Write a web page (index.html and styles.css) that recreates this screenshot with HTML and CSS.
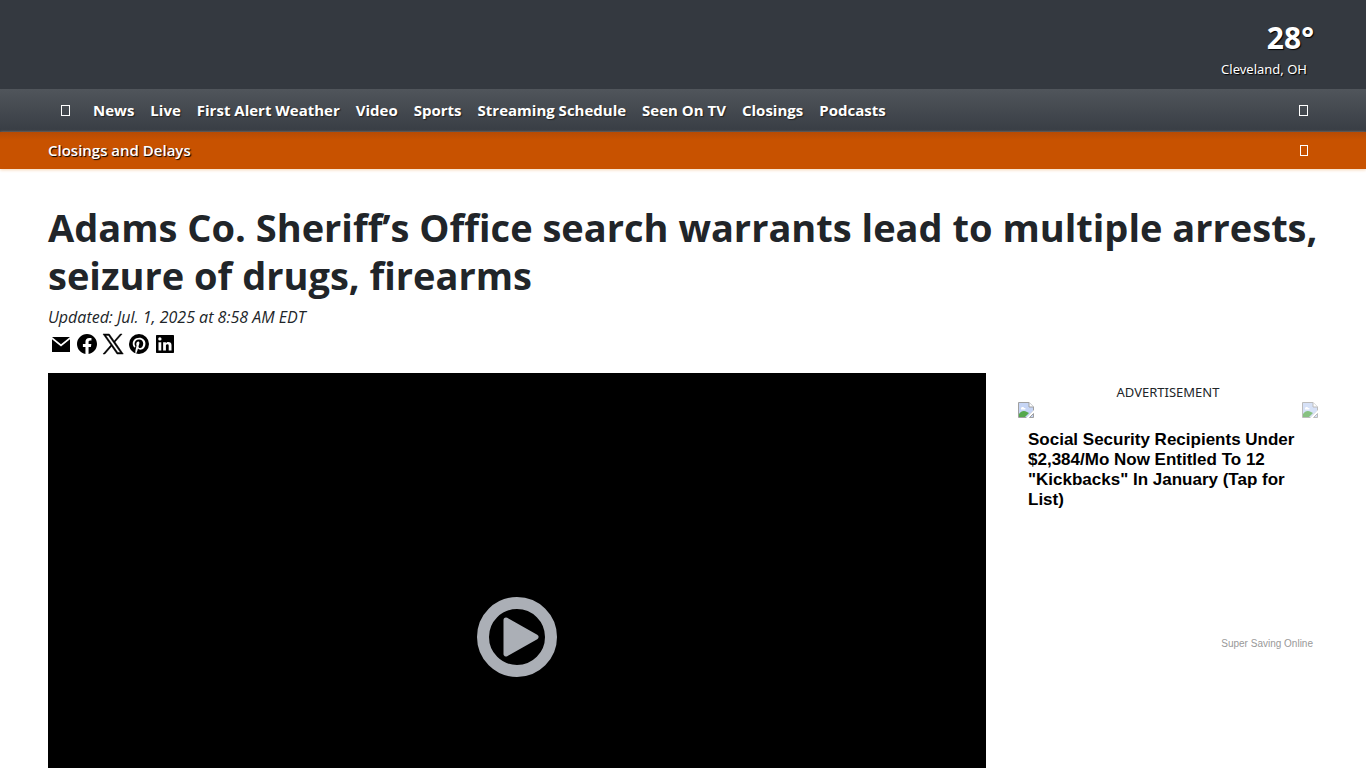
FILE: index.html
```html
<!DOCTYPE html>
<html lang="en">
<head>
    <meta charset="UTF-8">
    <meta name="viewport" content="width=device-width, initial-scale=1.0">
    <title>Adams Co. Sheriff’s Office search warrants lead to multiple arrests</title>
    <link rel="stylesheet" href="styles.css">
</head>
<body>
    <header>
        <div class="masthead">
            <a class="weather" href="#">
                <span class="temp">28°</span>
                <span class="city">Cleveland, OH</span>
            </a>
        </div>

        <nav class="main-nav">
            <ul>
                <li><a href="#" class="home" aria-label="Home"><span class="glyph"></span></a></li>
                <li><a href="#">News</a></li>
                <li><a href="#">Live</a></li>
                <li><a href="#">First Alert Weather</a></li>
                <li><a href="#">Video</a></li>
                <li><a href="#">Sports</a></li>
                <li><a href="#">Streaming Schedule</a></li>
                <li><a href="#">Seen On TV</a></li>
                <li><a href="#">Closings</a></li>
                <li><a href="#">Podcasts</a></li>
            </ul>
            <button type="button" class="icon-btn" aria-label="Search"><span class="glyph"></span></button>
        </nav>

        <div class="alert-bar">
            <a href="#">Closings and Delays</a>
            <button type="button" class="icon-btn" aria-label="Next alert"><span class="glyph small"></span></button>
        </div>
    </header>

    <main class="article">
        <h1>Adams Co. Sheriff’s Office search warrants lead to multiple arrests, seizure of drugs, firearms</h1>
        <p class="updated">Updated: Jul. 1, 2025 at 8:58 AM EDT</p>

        <div class="share">
            <a href="#" aria-label="Email this link">
                <svg viewBox="0 0 24 24"><path d="M3 5h18l-9 7.200z M3 7.200V20h18V7.200l-9 7.200z"/></svg>
            </a>
            <a href="#" aria-label="Share on Facebook">
                <svg viewBox="0 0 24 24"><path d="M12 2C6.500 2 2 6.500 2 12c0 5 3.660 9.130 8.440 9.880v-6.990H7.900V12h2.540V9.800c0-2.510 1.490-3.890 3.780-3.890 1.090 0 2.240.19 2.240.19v2.460h-1.260c-1.240 0-1.630.77-1.630 1.560V12h2.770l-.44 2.890h-2.330v6.990C18.340 21.130 22 17 22 12c0-5.500-4.500-10-10-10z"/></svg>
            </a>
            <a href="#" aria-label="Post on X">
                <svg viewBox="0 0 24 24"><path fill-rule="evenodd" stroke="#000" stroke-width=".5" d="M2 2h6.300l4.900 6.900L19.300 2h1.800l-7.100 8 8.300 12H16l-5.400-7.700L3.900 22H2l7.800-8.900zM4.800 3.400l12 17.200h2.700L7.500 3.400z"/></svg>
            </a>
            <a href="#" aria-label="Pin on Pinterest">
                <svg viewBox="0 0 24 24"><path d="M9.040 21.540c.96.290 1.930.46 2.960.46a10 10 0 1 0-10-10c0 4.250 2.670 7.900 6.440 9.340-.09-.78-.18-2.070 0-2.960l1.150-4.940s-.29-.58-.29-1.500c0-1.380.86-2.410 1.840-2.410.86 0 1.260.63 1.260 1.440 0 .86-.57 2.090-.86 3.270-.17.98.52 1.840 1.520 1.840 1.780 0 3.160-1.900 3.160-4.580 0-2.400-1.720-4.040-4.190-4.040-2.820 0-4.480 2.100-4.480 4.310 0 .86.280 1.730.74 2.300.09.06.09.14.06.290l-.29 1.090c0 .17-.11.230-.28.110-1.280-.56-2.020-2.380-2.020-3.850 0-3.160 2.240-6.030 6.560-6.030 3.440 0 6.120 2.470 6.120 5.750 0 3.440-2.130 6.200-5.180 6.200-.97 0-1.920-.52-2.260-1.130l-.67 2.370c-.23.86-.86 2.010-1.290 2.700z"/></svg>
            </a>
            <a href="#" aria-label="Share on LinkedIn">
                <svg viewBox="0 0 24 24"><path d="M20.300 3a.7.7 0 0 1 .7.7v16.600a.7.7 0 0 1-.7.7H3.700a.7.7 0 0 1-.7-.7V3.700a.7.7 0 0 1 .7-.7zM18.500 18.500v-5.300a3.260 3.260 0 0 0-3.260-3.260c-.85 0-1.840.52-2.320 1.300v-1.110h-2.790v8.370h2.790v-4.930c0-.77.620-1.400 1.390-1.400a1.400 1.400 0 0 1 1.400 1.400v4.930zM6.880 8.560a1.680 1.680 0 1 0 0-3.360 1.680 1.680 0 0 0 0 3.360zm1.390 9.940v-8.370H5.500v8.370z"/></svg>
            </a>
        </div>

        <div class="columns">
            <div class="player">
                <button type="button" aria-label="Play video">
                    <svg viewBox="0 0 80 80">
                        <circle cx="40" cy="40" r="34" fill="none" stroke="#abafb6" stroke-width="12"/>
                        <path d="M29 23 59 40 29 57z" fill="#abafb6" stroke="#abafb6" stroke-width="5" stroke-linejoin="round"/>
                    </svg>
                </button>
            </div>

            <aside>
                <div class="ad-label">ADVERTISEMENT</div>
                <div class="ad-images">
                    <svg class="missing" viewBox="0 0 16 16">
                        <path d="M.5.500h10.500l4.500 4.500v4L9 15.500H.5z" fill="#c6d5f5" stroke="#a0a0a0"/>
                        <path d="M1 15v-3c2-3 5-4 8-2l2 1-4 4z" fill="#55a84c"/>
                        <path d="M3 6.500c0-2 3-2 3-.5 2-.5 2 1.500 1 1.500H3z" fill="#fff"/>
                        <path d="M11 .5V5h4.500" fill="#fff" stroke="#a0a0a0"/>
                        <path d="M8 16 16 8v3l-5 5z" fill="#fff"/>
                        <path d="M11.500 15.500h4v-4z" fill="#c6d5f5" stroke="#a0a0a0"/>
                    </svg>
                    <svg class="missing faded" viewBox="0 0 16 16">
                        <path d="M.5.500h10.500l4.500 4.500v4L9 15.500H.5z" fill="#c6d5f5" stroke="#a0a0a0"/>
                        <path d="M1 15v-3c2-3 5-4 8-2l2 1-4 4z" fill="#55a84c"/>
                        <path d="M3 6.500c0-2 3-2 3-.5 2-.5 2 1.500 1 1.500H3z" fill="#fff"/>
                        <path d="M11 .5V5h4.500" fill="#fff" stroke="#a0a0a0"/>
                        <path d="M8 16 16 8v3l-5 5z" fill="#fff"/>
                        <path d="M11.500 15.500h4v-4z" fill="#c6d5f5" stroke="#a0a0a0"/>
                    </svg>
                </div>
                <a class="ad" href="#">
                    <span class="ad-title">Social Security Recipients Under $2,384/Mo Now Entitled To 12 "Kickbacks" In January (Tap for List)</span>
                    <span class="ad-brand">Super Saving Online</span>
                </a>
            </aside>
        </div>
    </main>
</body>
</html>
```
FILE: styles.css
```css
* {
    box-sizing: border-box;
}

body {
    margin: 0;
    font-family: "Segoe UI", "Open Sans", "Noto Sans", sans-serif;
    font-size: 16px;
    color: #212529;
    background: #fff;
}

a {
    color: inherit;
    text-decoration: none;
}

button {
    padding: 0;
    border: 0;
    background: none;
    cursor: pointer;
}

/* Header */
.masthead {
    display: flex;
    justify-content: flex-end;
    padding: 18px 52px 9px;
    background: #343940;
}

.weather {
    display: flex;
    flex-direction: column;
    align-items: flex-end;
    color: #fff;
    text-shadow: 1px 1px 1px #000;
}

.temp {
    font-size: 30px;
    line-height: 40px;
    font-weight: bold;
}

.city {
    padding-right: 7px;
    font-family: "Segoe UI", "Noto Sans", sans-serif;
    font-size: 13px;
    line-height: 22px;
}

.main-nav {
    display: flex;
    justify-content: space-between;
    align-items: center;
    padding: 9px 58px 10px 53px;
    background: linear-gradient(#50555b, #383d44);
}

.main-nav ul {
    display: flex;
    margin: 0;
    padding: 0;
    list-style: none;
}

.main-nav li a {
    display: block;
    padding: 0 8px;
    font-size: 15px;
    line-height: 24px;
    font-weight: bold;
    color: #fff;
    white-space: nowrap;
    text-shadow: 1px 1px 1px #222;
}

.main-nav li .home {
    width: 32px;
}

.glyph {
    display: inline-block;
    width: 9px;
    height: 11px;
    border: 1px solid #fff;
}

.glyph.small {
    width: 8px;
}

.icon-btn {
    display: flex;
}

.alert-bar {
    display: flex;
    justify-content: space-between;
    align-items: center;
    padding: 6px 58px 7px 48px;
    background: linear-gradient(#b64b05, #c85200 8px);
    color: #fff;
    font-size: 15px;
    line-height: 24px;
    font-weight: 600;
    text-shadow: 1px 1px 1px #000;
    box-shadow: 0 1px 3px #f5d5b5;
}

/* Article */
.article {
    padding: 34px 48px 0;
}

h1 {
    margin: 0;
    font-size: 38px;
    line-height: 48px;
    font-weight: bold;
}

.updated {
    margin: 6px 0 0;
    font-size: 16px;
    line-height: 24px;
    font-style: italic;
}

.share {
    display: flex;
    margin-top: 2px;
}

.share a {
    padding: 1px;
}

.share svg {
    display: block;
    width: 24px;
    height: 24px;
}

.columns {
    display: grid;
    grid-template-columns: minmax(0, 1fr) 300px;
    align-items: start;
    gap: 32px;
    margin-top: 16px;
}

.player {
    display: flex;
    align-items: center;
    justify-content: center;
    aspect-ratio: 16 / 9;
    background: #000;
}

.player svg {
    display: block;
    width: 80px;
    height: 80px;
}

/* Sidebar ad */
.ad-label {
    padding-top: 9px;
    font-family: "Segoe UI", "Noto Sans", sans-serif;
    font-size: 13px;
    line-height: 20px;
    text-align: center;
}

.ad-images {
    display: flex;
    justify-content: space-between;
}

.missing {
    width: 16px;
    height: 16px;
}

.faded {
    opacity: 0.7;
}

.ad {
    display: flex;
    flex-direction: column;
    justify-content: space-between;
    height: 240px;
    padding: 12px 5px 8px 10px;
    font-family: Arial, "Liberation Sans", sans-serif;
}

.ad-title {
    padding-right: 16px;
    font-size: 17px;
    line-height: 20px;
    font-weight: bold;
    color: #000;
}

.ad-brand {
    font-size: 10px;
    line-height: 12px;
    text-align: right;
    color: #999;
}
```
